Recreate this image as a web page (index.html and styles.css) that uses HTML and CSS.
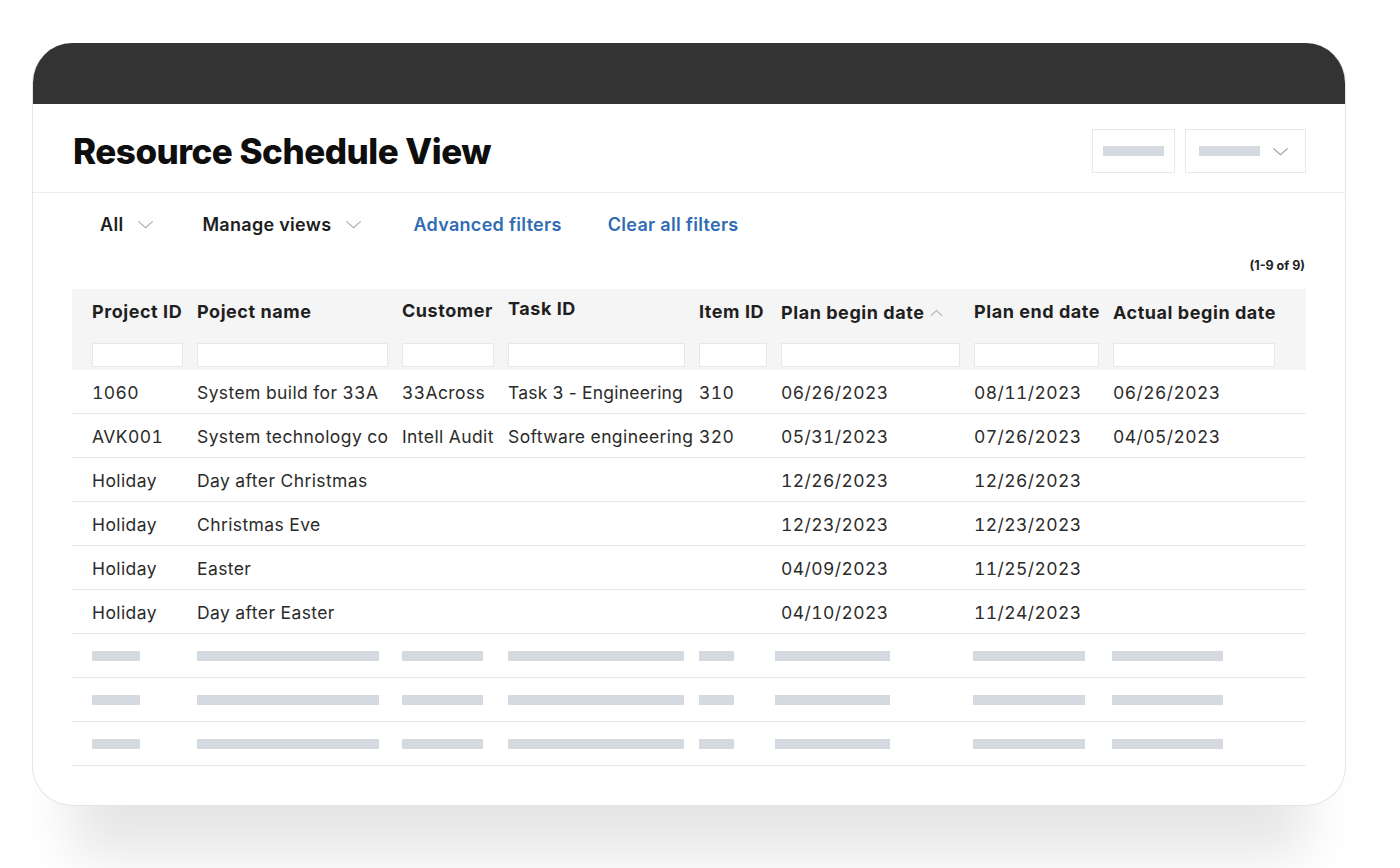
FILE: index.html
```html
<!DOCTYPE html>
<html>
<head>
<meta charset="utf-8">
<title>Resource Schedule View</title>
<link rel="stylesheet" href="styles.css">
</head>
<body>
<div class="stage">
  <div class="card">
    <div class="topbar"></div>
    <div class="header">
      <h1 class="title">Resource Schedule View</h1>
      <div class="actions">
        <div class="btn btn-a"><span class="ph"></span></div>
        <div class="btn btn-b"><span class="ph"></span>
          <svg class="chev chev-btn" viewBox="0 0 18 10"><path d="M1 1.5 L9 8.5 L17 1.5"/></svg>
        </div>
      </div>
    </div>

    <div class="filters">
      <span class="dd">All<svg class="chev" viewBox="0 0 18 10"><path d="M1 1.5 L9 8.5 L17 1.5"/></svg></span>
      <span class="dd dd-2">Manage views<svg class="chev" viewBox="0 0 18 10"><path d="M1 1.5 L9 8.5 L17 1.5"/></svg></span>
      <a class="link link-1">Advanced filters</a>
      <a class="link">Clear all filters</a>
    </div>

    <div class="count">(1-9 of 9)</div>

    <div class="table">
      <div class="thead">
        <div class="grid hrow">
          <div class="lbl">Project ID</div>
          <div class="lbl">Poject name</div>
          <div class="lbl up2">Customer</div>
          <div class="lbl up6">Task ID</div>
          <div class="lbl">Item ID</div>
          <div class="lbl dn1">Plan begin date<svg class="sort" viewBox="0 0 14 8"><path d="M1 7 L7 1.5 L13 7"/></svg></div>
          <div class="lbl up1">Plan end date</div>
          <div class="lbl dn2">Actual begin date</div>
        </div>
        <div class="grid frow">
          <div class="inp"></div><div class="inp"></div><div class="inp"></div><div class="inp"></div>
          <div class="inp"></div><div class="inp"></div><div class="inp"></div><div class="inp"></div>
        </div>
      </div>

      <div class="grid row">
        <div>1060</div><div>System build for 33A</div><div>33Across</div><div class="prop">Task 3 - Engineering</div><div>310</div><div>06/26/2023</div><div>08/11/2023</div><div>06/26/2023</div>
      </div>
      <div class="grid row">
        <div>AVK001</div><div>System technology co</div><div>Intell Audit</div><div>Software engineering</div><div>320</div><div>05/31/2023</div><div>07/26/2023</div><div>04/05/2023</div>
      </div>
      <div class="grid row">
        <div>Holiday</div><div>Day after Christmas</div><div></div><div></div><div></div><div>12/26/2023</div><div>12/26/2023</div><div></div>
      </div>
      <div class="grid row">
        <div>Holiday</div><div>Christmas Eve</div><div></div><div></div><div></div><div>12/23/2023</div><div>12/23/2023</div><div></div>
      </div>
      <div class="grid row">
        <div>Holiday</div><div>Easter</div><div></div><div></div><div></div><div>04/09/2023</div><div>11/25/2023</div><div></div>
      </div>
      <div class="grid row">
        <div>Holiday</div><div>Day after Easter</div><div></div><div></div><div></div><div>04/10/2023</div><div>11/24/2023</div><div></div>
      </div>

      <div class="grid row ph-row">
        <span class="bar b1"></span><span class="bar b2"></span><span class="bar b3"></span><span class="bar b4"></span><span class="bar b5"></span><span class="bar b6"></span><span class="bar b7"></span><span class="bar b8"></span>
      </div>
      <div class="grid row ph-row">
        <span class="bar b1"></span><span class="bar b2"></span><span class="bar b3"></span><span class="bar b4"></span><span class="bar b5"></span><span class="bar b6"></span><span class="bar b7"></span><span class="bar b8"></span>
      </div>
      <div class="grid row ph-row">
        <span class="bar b1"></span><span class="bar b2"></span><span class="bar b3"></span><span class="bar b4"></span><span class="bar b5"></span><span class="bar b6"></span><span class="bar b7"></span><span class="bar b8"></span>
      </div>
    </div>
  </div>
</div>
</body>
</html>
```

FILE: styles.css
```css
* { box-sizing: border-box; }

html, body {
  margin: 0;
  padding: 0;
  background: #ffffff;
}

body {
  font-family: Inter, "Noto Sans", "Liberation Sans", sans-serif;
  color: #222222;
  width: 1400px;
  height: 868px;
  overflow: hidden;
}

.stage {
  padding: 43px 0 0 32px;
}

.card {
  width: 1314px;
  height: 763px;
  background: #ffffff;
  border: 1px solid #e4e4e4;
  border-top: none;
  border-radius: 40px;
  overflow: hidden;
  box-shadow: 0 90px 50px -40px rgba(0, 0, 0, 0.1);
}

.topbar {
  height: 61px;
  background: #333333;
  margin: 0 -1px;
}

.header {
  height: 89px;
  display: flex;
  align-items: center;
  justify-content: space-between;
  padding: 6px 39px 0 40px;
  border-bottom: 1px solid #ececec;
}

.title {
  margin: 0;
  font-family: Inter, "Liberation Sans", sans-serif;
  font-size: 35px;
  font-weight: 800;
  letter-spacing: -0.5px;
  color: #0e0e0e;
  line-height: 40px;
}

.actions {
  display: flex;
  gap: 10px;
}

.btn {
  height: 44px;
  border: 1px solid #e7e9eb;
  background: #ffffff;
  display: flex;
  align-items: center;
}

.btn-a {
  width: 83px;
  padding-left: 10px;
}

.btn-b {
  width: 121px;
  padding-left: 13px;
}

.ph {
  display: block;
  width: 61px;
  height: 10px;
  background: #d4dadf;
}

.chev {
  width: 17px;
  height: 9px;
  fill: none;
  stroke: #a8b0b8;
  stroke-width: 1.4;
}

.chev-btn {
  margin-left: 12px;
  stroke: #9aa3ab;
}

.filters {
  height: 60px;
  display: flex;
  align-items: center;
  padding: 3px 0 0 67px;
  font-size: 18px;
  font-weight: 600;
  letter-spacing: 0.3px;
}

.dd {
  display: flex;
  align-items: center;
  gap: 14px;
  color: #1d1d1d;
  margin-right: 48px;
}

.dd-2 {
  margin-right: 51px;
}

.link {
  color: #2f6cb3;
  text-decoration: none;
}

.link-1 {
  margin-right: 46px;
}

.count {
  margin: 5px 40px 0 0;
  text-align: right;
  font-size: 12.5px;
  font-weight: 700;
  line-height: 16px;
  color: #222222;
}

.table {
  margin: 15px 39px 0 39px;
}

.grid {
  display: grid;
  grid-template-columns: 91px 191px 92px 177px 68px 179px 125px 162px;
  column-gap: 14px;
  padding-left: 20px;
}

.thead {
  background: #f5f5f5;
  padding-bottom: 3px;
}

.hrow {
  padding-top: 12px;
  height: 32px;
}

.lbl {
  font-size: 18px;
  font-weight: 700;
  line-height: 20px;
  white-space: nowrap;
  color: #1f1f1f;
  letter-spacing: 0.55px;
  display: flex;
  align-items: center;
}

.up1 { margin-top: -1px; }
.up2 { margin-top: -2px; }
.up6 { margin-top: -6px; }
.dn1 { margin-top: 1px; }
.dn2 { margin-top: 2px; }

.sort {
  width: 13px;
  height: 8px;
  margin-left: 6px;
  fill: none;
  stroke: #b3bac1;
  stroke-width: 1.3;
}

.frow {
  margin-top: 22px;
}

.inp {
  height: 24px;
  background: #ffffff;
  border: 1px solid #e6e9ec;
}

.row {
  height: 44px;
  align-items: center;
  border-bottom: 1px solid #e6eaee;
  font-size: 17.5px;
  letter-spacing: 0.4px;
  font-variant-numeric: tabular-nums;
  line-height: 20px;
  color: #2b2b2b;
  white-space: nowrap;
  padding-top: 3px;
}

.row .prop {
  font-variant-numeric: normal;
  letter-spacing: 0.2px;
}

.ph-row {
  padding-top: 0;
}

.bar {
  display: block;
  height: 10px;
  background: #d4dadf;
}

.b1 { width: 48px; }
.b2 { width: 182px; }
.b3 { width: 81px; }
.b4 { width: 176px; }
.b5 { width: 35px; }
.b6 { width: 115px; margin-left: -6px; }
.b7 { width: 112px; margin-left: -1px; }
.b8 { width: 111px; margin-left: -1px; }
```
